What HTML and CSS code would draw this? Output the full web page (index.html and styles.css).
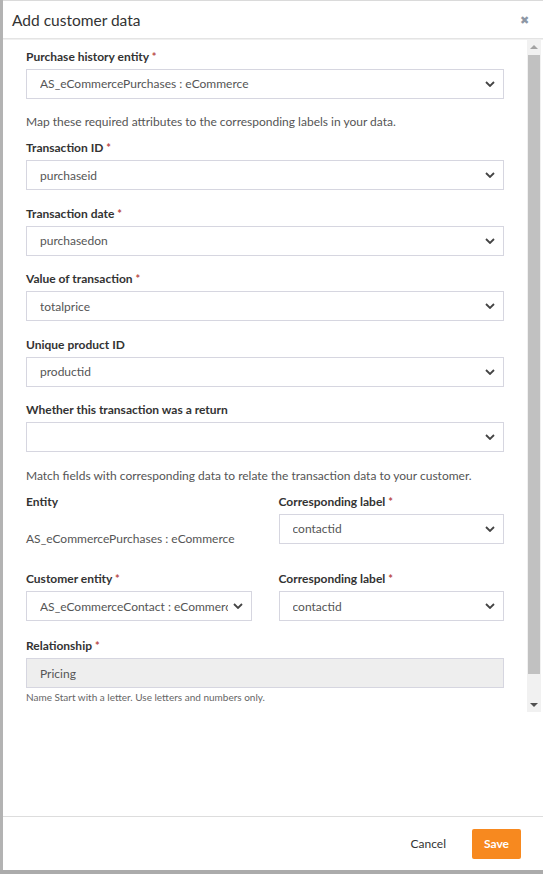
FILE: index.html
```html
<!DOCTYPE html>
<html lang="en">
<head>
<meta charset="utf-8">
<title>Add customer data</title>
<link rel="stylesheet" href="styles.css">
</head>
<body>
<div class="page">
  <div class="backdrop-strip"></div>
  <div class="modal">
    <div class="header">
      <span class="title">Add customer data</span>
      <span class="close">&#x2716;</span>
    </div>
    <div class="body">
      <div class="scroll">
        <div class="content">
          <div class="group">
            <div class="label">Purchase history entity <span class="req">*</span></div>
            <div class="select"><span class="val">AS_eCommercePurchases : eCommerce</span><svg class="chev" viewBox="0 0 10 6" width="10" height="6"><path d="M1 1l4 4 4-4" fill="none" stroke="#444" stroke-width="1.8"/></svg></div>
          </div>
          <p class="note">Map these required attributes to the corresponding labels in your data.</p>
          <div class="group">
            <div class="label">Transaction ID <span class="req">*</span></div>
            <div class="select"><span class="val">purchaseid</span><svg class="chev" viewBox="0 0 10 6" width="10" height="6"><path d="M1 1l4 4 4-4" fill="none" stroke="#444" stroke-width="1.8"/></svg></div>
          </div>
          <div class="group">
            <div class="label">Transaction date <span class="req">*</span></div>
            <div class="select"><span class="val">purchasedon</span><svg class="chev" viewBox="0 0 10 6" width="10" height="6"><path d="M1 1l4 4 4-4" fill="none" stroke="#444" stroke-width="1.8"/></svg></div>
          </div>
          <div class="group">
            <div class="label">Value of transaction <span class="req">*</span></div>
            <div class="select"><span class="val">totalprice</span><svg class="chev" viewBox="0 0 10 6" width="10" height="6"><path d="M1 1l4 4 4-4" fill="none" stroke="#444" stroke-width="1.8"/></svg></div>
          </div>
          <div class="group">
            <div class="label">Unique product ID</div>
            <div class="select"><span class="val">productid</span><svg class="chev" viewBox="0 0 10 6" width="10" height="6"><path d="M1 1l4 4 4-4" fill="none" stroke="#444" stroke-width="1.8"/></svg></div>
          </div>
          <div class="group">
            <div class="label">Whether this transaction was a return</div>
            <div class="select"><span class="val"></span><svg class="chev" viewBox="0 0 10 6" width="10" height="6"><path d="M1 1l4 4 4-4" fill="none" stroke="#444" stroke-width="1.8"/></svg></div>
          </div>
          <p class="note">Match fields with corresponding data to relate the transaction data to your customer.</p>
          <div class="grid">
            <div class="cell">
              <div class="label">Entity</div>
              <div class="static">AS_eCommercePurchases : eCommerce</div>
            </div>
            <div class="cell">
              <div class="label">Corresponding label <span class="req">*</span></div>
              <div class="select"><span class="val">contactid</span><svg class="chev" viewBox="0 0 10 6" width="10" height="6"><path d="M1 1l4 4 4-4" fill="none" stroke="#444" stroke-width="1.8"/></svg></div>
            </div>
            <div class="cell">
              <div class="label">Customer entity <span class="req">*</span></div>
              <div class="select"><span class="val clip">AS_eCommerceContact : eCommerce</span><svg class="chev" viewBox="0 0 10 6" width="10" height="6"><path d="M1 1l4 4 4-4" fill="none" stroke="#444" stroke-width="1.8"/></svg></div>
            </div>
            <div class="cell">
              <div class="label">Corresponding label <span class="req">*</span></div>
              <div class="select"><span class="val">contactid</span><svg class="chev" viewBox="0 0 10 6" width="10" height="6"><path d="M1 1l4 4 4-4" fill="none" stroke="#444" stroke-width="1.8"/></svg></div>
            </div>
          </div>
          <div class="group last">
            <div class="label">Relationship <span class="req">*</span></div>
            <div class="input disabled">Pricing</div>
            <div class="help">Name Start with a letter. Use letters and numbers only.</div>
          </div>
        </div>
        <div class="scrollbar">
          <div class="arrow up"></div>
          <div class="thumb"></div>
          <div class="arrow down"></div>
        </div>
      </div>
    </div>
    <div class="footer">
      <span class="cancel">Cancel</span>
      <span class="save">Save</span>
    </div>
  </div>
</div>
</body>
</html>
```
FILE: styles.css
```css
* { box-sizing: border-box; }
html, body { margin: 0; padding: 0; }
body {
  background: #ababab;
  font-family: Lato, "Noto Sans", sans-serif;
  color: #333;
  width: 543px;
  height: 874px;
  overflow: hidden;
}
.page {
  display: flex;
  height: 870px;
}
.backdrop-strip {
  width: 3px;
  background: #b3b3b3;
}
.modal {
  flex: 1;
  background: #fff;
  border-top: 1px solid #dadada;
  display: flex;
  flex-direction: column;
}
.header {
  height: 38px;
  border-bottom: 1px solid #e4e4e4;
  display: flex;
  align-items: center;
  justify-content: space-between;
  padding: 0 14px 0 9px;
}
.title {
  font-size: 15.5px;
  color: #333;
}
.close {
  font-size: 11px;
  color: #8e97a5;
}
.body {
  flex: 1;
  border-top: 1px solid #f0f0f0;
}
.scroll {
  height: 672px;
  display: flex;
}
.content {
  flex: 1;
  min-width: 0;
  padding: 7.5px 23px 0 23px;
  font-size: 12px;
}
.group { margin-bottom: 14.5px; }
.label {
  font-weight: 700;
  font-size: 12px;
  line-height: 17px;
  margin-bottom: 4px;
  color: #333;
}
.req { color: #b94a48; font-size: 11px; }
.select, .input {
  height: 30px;
  border: 1px solid #d6d6e0;
  display: flex;
  align-items: center;
  padding: 0 8px 0 13px;
  color: #555;
  font-size: 12px;
  background: #fff;
}
.val {
  flex: 1;
  min-width: 0;
  white-space: nowrap;
  overflow: hidden;
}
.select .clip {
  flex: none;
  width: 188px;
}
.chev { flex: none; margin-left: auto; }
.input.disabled {
  background: #eeeeee;
  color: #555;
}
.note {
  margin: 0 0 9px 0;
  font-size: 12px;
  line-height: 17px;
  color: #555;
}
.grid {
  display: grid;
  grid-template-columns: minmax(0, 1fr) minmax(0, 1fr);
  column-gap: 27px;
  row-gap: 23.5px;
  margin-bottom: 16px;
}
.static {
  margin-top: 20px;
  line-height: 17px;
  color: #555;
  white-space: nowrap;
}
.help {
  margin-top: 3px;
  font-size: 10px;
  color: #666;
}
.scrollbar {
  width: 14px;
  background: #f1f1f1;
  display: flex;
  flex-direction: column;
  align-items: center;
  margin-right: 2px;
}
.arrow {
  width: 0; height: 0;
  border-left: 4px solid transparent;
  border-right: 4px solid transparent;
  margin: 5px 0;
}
.arrow.up { border-bottom: 4px solid #a3a3a3; }
.arrow.down { border-top: 4px solid #505050; }
.thumb {
  flex: 1;
  width: 12px;
  background: #c1c1c1;
  margin: 1px 0 24px 0;
}
.footer {
  height: 54px;
  border-top: 1px solid #dddddd;
  display: flex;
  align-items: center;
  justify-content: flex-end;
  padding-right: 22px;
  gap: 26px;
  font-size: 12px;
}
.cancel { color: #333; }
.save {
  background: #f7891f;
  color: #fff;
  font-weight: 700;
  height: 30px;
  width: 49px;
  display: flex;
  align-items: center;
  justify-content: center;
  border-radius: 2px;
}
```
